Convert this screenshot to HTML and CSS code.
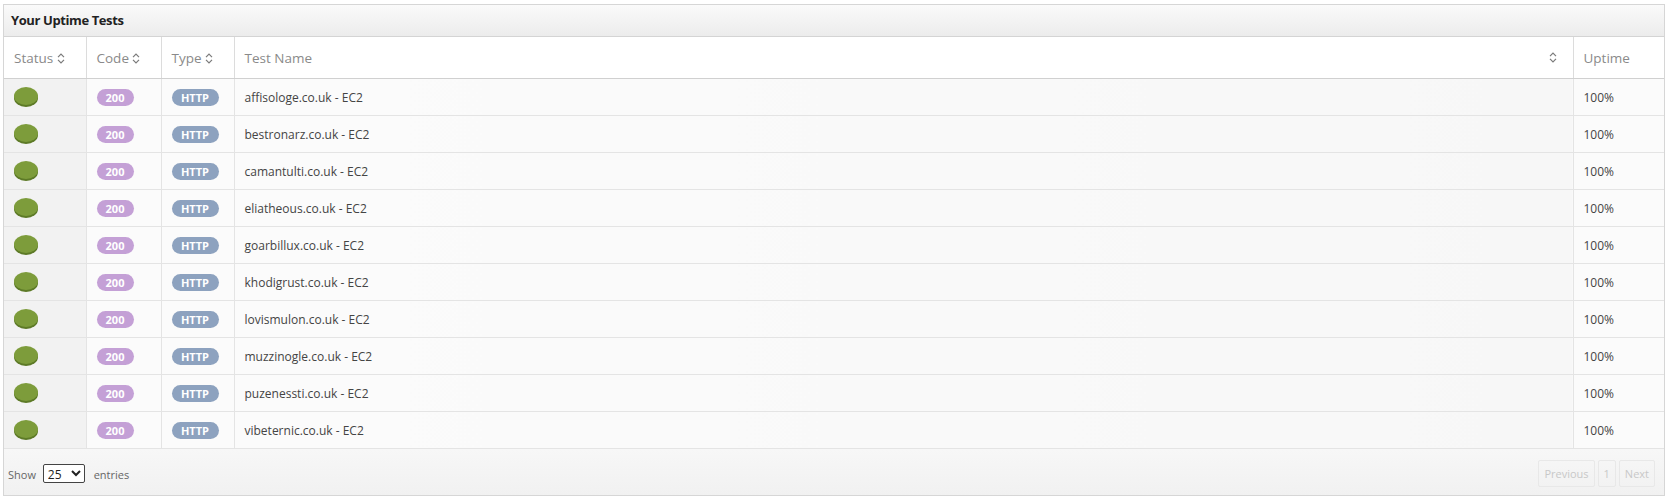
FILE: index.html
```html
<!DOCTYPE html>
<html>
<head>
    <title>Your Uptime Tests</title>
    <link rel="stylesheet" href="styles.css">
</head>
<body>
    <div class="panel">
        <div class="panel-title">Your Uptime Tests</div>
        <table class="tests">
            <colgroup>
                <col class="c-status"><col class="c-code"><col class="c-type"><col><col class="c-uptime">
            </colgroup>
            <thead>
                <tr>
                    <th>Status <svg class="sort" viewBox="0 0 8 11"><path d="M1 4.2 4 1.2 7 4.2M1 6.8 4 9.8 7 6.8"/></svg></th>
                    <th>Code <svg class="sort" viewBox="0 0 8 11"><path d="M1 4.2 4 1.2 7 4.2M1 6.8 4 9.8 7 6.8"/></svg></th>
                    <th>Type <svg class="sort" viewBox="0 0 8 11"><path d="M1 4.2 4 1.2 7 4.2M1 6.8 4 9.8 7 6.8"/></svg></th>
                    <th><div class="th-split">Test Name <svg class="sort" viewBox="0 0 8 11"><path d="M1 4.2 4 1.2 7 4.2M1 6.8 4 9.8 7 6.8"/></svg></div></th>
                    <th>Uptime</th>
                </tr>
            </thead>
            <tbody>
                <tr><td><span class="dot"></span></td><td><span class="badge code">200</span></td><td><span class="badge type">HTTP</span></td><td>affisologe.co.uk - EC2</td><td>100%</td></tr>
                <tr><td><span class="dot"></span></td><td><span class="badge code">200</span></td><td><span class="badge type">HTTP</span></td><td>bestronarz.co.uk - EC2</td><td>100%</td></tr>
                <tr><td><span class="dot"></span></td><td><span class="badge code">200</span></td><td><span class="badge type">HTTP</span></td><td>camantulti.co.uk - EC2</td><td>100%</td></tr>
                <tr><td><span class="dot"></span></td><td><span class="badge code">200</span></td><td><span class="badge type">HTTP</span></td><td>eliatheous.co.uk - EC2</td><td>100%</td></tr>
                <tr><td><span class="dot"></span></td><td><span class="badge code">200</span></td><td><span class="badge type">HTTP</span></td><td>goarbillux.co.uk - EC2</td><td>100%</td></tr>
                <tr><td><span class="dot"></span></td><td><span class="badge code">200</span></td><td><span class="badge type">HTTP</span></td><td>khodigrust.co.uk - EC2</td><td>100%</td></tr>
                <tr><td><span class="dot"></span></td><td><span class="badge code">200</span></td><td><span class="badge type">HTTP</span></td><td>lovismulon.co.uk - EC2</td><td>100%</td></tr>
                <tr><td><span class="dot"></span></td><td><span class="badge code">200</span></td><td><span class="badge type">HTTP</span></td><td>muzzinogle.co.uk - EC2</td><td>100%</td></tr>
                <tr><td><span class="dot"></span></td><td><span class="badge code">200</span></td><td><span class="badge type">HTTP</span></td><td>puzenessti.co.uk - EC2</td><td>100%</td></tr>
                <tr><td><span class="dot"></span></td><td><span class="badge code">200</span></td><td><span class="badge type">HTTP</span></td><td>vibeternic.co.uk - EC2</td><td>100%</td></tr>
            </tbody>
        </table>
        <div class="panel-foot">
            <label class="length">
                Show
                <select><option>25</option></select>
                entries
            </label>
            <div class="pager">
                <span class="page-btn">Previous</span>
                <span class="page-btn">1</span>
                <span class="page-btn">Next</span>
            </div>
        </div>
    </div>
</body>
</html>
```

FILE: styles.css
```css
/* Uptime tests panel: title bar, sortable table and a paging footer. */
body, html {
    margin: 0;
    padding: 0;
    background: #fff;
    font-family: "Open Sans", sans-serif;
    color: #333;
}
body {
    padding: 4px 3px 3px;
}
.panel {
    border: 1px solid #d6d6d6;
    background: #fff;
}
.panel-title {
    height: 31px;
    line-height: 30px;
    padding: 0 7px;
    font-size: 13px;
    font-weight: 700;
    letter-spacing: -0.4px;
    color: #222;
    background: linear-gradient(#fafafa, #ececec);
    border-bottom: 1px solid #d4d4d4;
}

/* The table itself. */
.tests {
    width: 100%;
    border-collapse: collapse;
    table-layout: fixed;
}
.c-status { width: 82px; }
.c-code { width: 75px; }
.c-type { width: 73px; }
.c-uptime { width: 91px; }
.tests th {
    height: 41px;
    padding: 0 10px;
    text-align: left;
    font-size: 13.5px;
    font-weight: 400;
    color: #8a8a8a;
    border-right: 1px solid #dcdcdc;
    border-bottom: 1px solid #d0d0d0;
}
.tests th:last-child,
.tests td:last-child {
    border-right: none;
}
.th-split {
    display: flex;
    justify-content: space-between;
    align-items: center;
    padding-right: 6px;
}
.sort {
    width: 8px;
    height: 11px;
    vertical-align: -1px;
    fill: none;
    stroke: #7a7a7a;
    stroke-width: 1.2;
}
.tests td {
    height: 36px;
    padding: 0 10px;
    font-size: 12px;
    color: #444;
    background: #fbfbfb;
    border-right: 1px solid #e4e4e4;
    border-bottom: 1px solid #e4e4e4;
}
.tests td:first-child {
    background: #f2f2f2;
}
.tests td:nth-child(4) {
    background: linear-gradient(90deg, #fbfbfb, #f7f7f7);
}

/* Status light and the two pill badges. */
.dot {
    display: block;
    width: 24px;
    height: 18px;
    margin-top: -2px;
    border-radius: 50%;
    background: #7d9c3b;
    box-shadow: 0 2px 0 #5d7a27;
}
.badge {
    display: inline-block;
    height: 17px;
    line-height: 17px;
    border-radius: 9px;
    font-size: 11px;
    font-weight: 700;
    color: #fff;
    text-align: center;
}
.badge.code {
    width: 37px;
    background: #c4a0d6;
}
.badge.type {
    width: 47px;
    background: #8da2bf;
}

/* Footer with page length and paging. */
.panel-foot {
    height: 46px;
    display: flex;
    justify-content: space-between;
    align-items: center;
    padding: 2px 9px 0 4px;
    box-sizing: border-box;
    background: linear-gradient(#f7f7f7, #f1f1f1);
    font-size: 11px;
    color: #666;
}
.length select {
    width: 42px;
    height: 19px;
    margin: 0 6px 0 4px;
    font-family: "Open Sans", sans-serif;
    font-size: 12px;
    color: #222;
    border: 1px solid #444;
    border-radius: 2px;
    background: #fff;
}
.pager {
    display: flex;
    gap: 3px;
}
.page-btn {
    padding: 5px 5px;
    font-size: 11px;
    color: #c8c8c8;
    border: 1px solid #e8e8e8;
    border-radius: 2px;
}
```
